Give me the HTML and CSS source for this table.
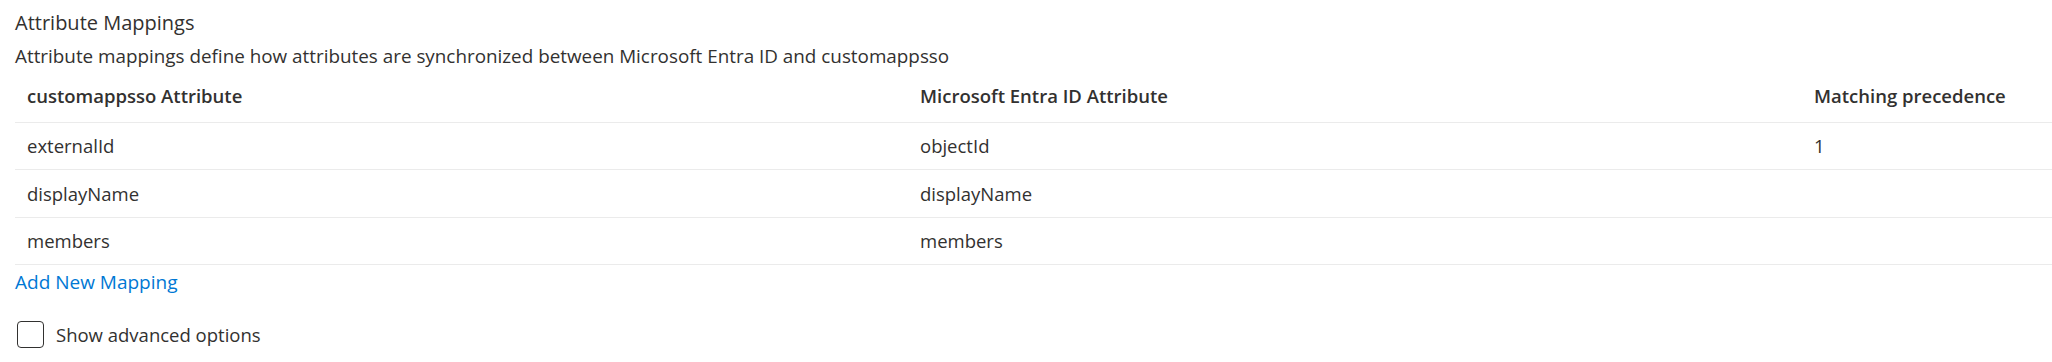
FILE: index.html
```html
<!DOCTYPE html>
<html lang="en">
<head>
<meta charset="utf-8">
<title>Attribute Mappings</title>
<link rel="stylesheet" href="styles.css">
</head>
<body>
<section class="panel">
  <h2 class="title">Attribute Mappings</h2>
  <p class="desc">Attribute mappings define how attributes are synchronized between Microsoft Entra ID and customappsso</p>
  <div class="table" role="table">
    <div class="row head" role="row">
      <div class="cell" role="columnheader">customappsso Attribute</div>
      <div class="cell" role="columnheader">Microsoft Entra ID Attribute</div>
      <div class="cell" role="columnheader">Matching precedence</div>
    </div>
    <div class="row" role="row">
      <div class="cell">externalId</div>
      <div class="cell">objectId</div>
      <div class="cell">1</div>
    </div>
    <div class="row" role="row">
      <div class="cell">displayName</div>
      <div class="cell">displayName</div>
      <div class="cell"></div>
    </div>
    <div class="row" role="row">
      <div class="cell">members</div>
      <div class="cell">members</div>
      <div class="cell"></div>
    </div>
  </div>
  <a class="add-link" href="#">Add New Mapping</a>
  <label class="check">
    <input type="checkbox" class="check-input">
    <span class="check-box"></span>
    <span class="check-label">Show advanced options</span>
  </label>
</section>
</body>
</html>
```

FILE: styles.css
```css
html, body {
  margin: 0;
  padding: 0;
  background: #ffffff;
}

body {
  font-family: "Open Sans", "Noto Sans", "Liberation Sans", sans-serif;
  color: #323130;
  font-size: 18.5px;
}

.panel {
  padding: 4px 0 0 15px;
}

.title {
  margin: 0;
  font-size: 20px;
  font-weight: 400;
  line-height: 38px;
}

.desc {
  margin: 0;
  font-size: 18.85px;
  line-height: 29px;
}

.table {
  display: flex;
  flex-direction: column;
  margin-top: 12px;
}

.row {
  display: grid;
  grid-template-columns: 893px 894px 1fr;
  height: 47px;
  box-sizing: border-box;
  align-items: center;
  border-bottom: 1px solid #ebebeb;
}

.row:nth-child(3) {
  height: 48px;
}

.row.head {
  height: 40px;
  align-items: start;
  font-size: 18.5px;
  font-weight: 600;
}

.cell {
  padding-left: 12px;
  line-height: 26px;
  white-space: nowrap;
}

.add-link {
  display: block;
  width: max-content;
  margin-top: 2px;
  color: #0078d4;
  font-size: 19px;
  text-decoration: none;
  line-height: 30px;
}

.check {
  display: flex;
  align-items: center;
  gap: 12px;
  margin-top: 24px;
  margin-left: 2px;
  width: max-content;
}

.check-input {
  position: absolute;
  opacity: 0;
  width: 0;
  height: 0;
  margin: 0;
}

.check-box {
  width: 27px;
  height: 27px;
  box-sizing: border-box;
  border: 1px solid #323130;
  border-radius: 4px;
}

.check-label {
  line-height: 27px;
}
```
